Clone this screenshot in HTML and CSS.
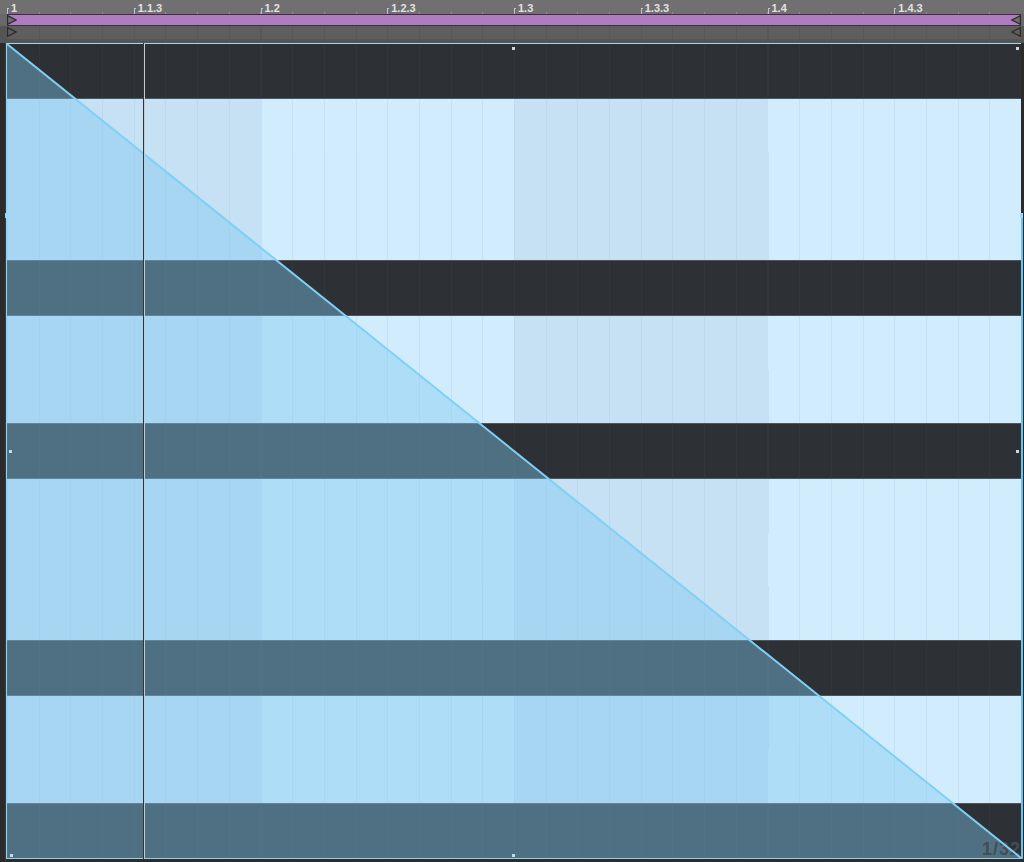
FILE: index.html
```html
<!DOCTYPE html>
<html>
<head>
<meta charset="utf-8">
<link rel="stylesheet" href="styles.css">
</head>
<body>
<div class="app">
  <div class="ruler">
    <div class="ruler-grid">
      <div class="mark"><span class="tick"></span><span class="lbl">1</span></div>
      <div class="mark"><span class="tick"></span><span class="lbl">1.1.3</span></div>
      <div class="mark"><span class="tick"></span><span class="lbl">1.2</span></div>
      <div class="mark"><span class="tick"></span><span class="lbl">1.2.3</span></div>
      <div class="mark"><span class="tick"></span><span class="lbl">1.3</span></div>
      <div class="mark"><span class="tick"></span><span class="lbl">1.3.3</span></div>
      <div class="mark"><span class="tick"></span><span class="lbl">1.4</span></div>
      <div class="mark"><span class="tick"></span><span class="lbl">1.4.3</span></div>
    </div>
  </div>
  <div class="loop">
    <div class="loop-bar"></div>
    <svg class="flag flag-l1" width="10" height="10" viewBox="0 0 10 10"><path d="M0.6 0.6 L9 5 L0.6 9.4 Z" fill="#6e6e6e" stroke="#2a2a2a" stroke-width="1.2"/></svg>
    <svg class="flag flag-r1" width="10" height="10" viewBox="0 0 10 10"><path d="M9.4 0.6 L1 5 L9.4 9.4 Z" fill="#6e6e6e" stroke="#2a2a2a" stroke-width="1.2"/></svg>
  </div>
  <div class="lane">
    <div class="lane-grid"></div>
    <svg class="flag flag-l2" width="10" height="10" viewBox="0 0 10 10"><path d="M0.6 0.6 L9 5 L0.6 9.4 Z" fill="#5e5e5e" stroke="#2a2a2a" stroke-width="1.2"/></svg>
    <svg class="flag flag-r2" width="10" height="10" viewBox="0 0 10 10"><path d="M9.4 0.6 L1 5 L9.4 9.4 Z" fill="#5e5e5e" stroke="#2a2a2a" stroke-width="1.2"/></svg>
  </div>
  <div class="editor">
    <div class="gutter"></div>
    <div class="clip">
      <div class="rows">
        <div class="row dark"></div>
        <div class="row light"></div>
        <div class="row light"></div>
        <div class="row light"></div>
        <div class="row dark"></div>
        <div class="row light"></div>
        <div class="row light"></div>
        <div class="row dark"></div>
        <div class="row light"></div>
        <div class="row light"></div>
        <div class="row light"></div>
        <div class="row dark"></div>
        <div class="row light"></div>
        <div class="row light"></div>
        <div class="row dark"></div>
      </div>
      <svg class="env" viewBox="0 0 1014 814" preserveAspectRatio="none">
        <polygon points="0,0 1014,814 0,814" fill="rgba(125,200,238,0.42)"/>
      </svg>
      <div class="grid-label">1/32</div>
      <svg class="env" viewBox="0 0 1014 814" preserveAspectRatio="none">
        <line x1="0" y1="0" x2="1014" y2="814" stroke="#80d0f6" stroke-width="2"/>
      </svg>
      <div class="cursor"></div>
      <div class="edge-r"></div>
      <div class="handle handle-l"></div>
      <div class="handle handle-r"></div>
      <div class="dot d1"></div>
      <div class="dot d2"></div>
      <div class="dot d3"></div>
      <div class="dot d4"></div>
      <div class="dot d5"></div>
      <div class="dot d6"></div>
    </div>
    <div class="gutter-r"></div>
  </div>
</div>
</body>
</html>
```

FILE: styles.css
```css
* { box-sizing: border-box; }
html, body {
  margin: 0;
  padding: 0;
  width: 1024px;
  height: 862px;
  overflow: hidden;
  background: #2b2b2b;
  font-family: "Liberation Sans", Arial, sans-serif;
}
.app {
  width: 1024px;
  height: 862px;
  display: flex;
  flex-direction: column;
}

/* ruler */
.ruler {
  height: 14px;
  background: #707070;
  padding-left: 7px;
  flex: none;
}
.ruler-grid {
  width: 1014px;
  height: 14px;
  display: flex;
  background-image: repeating-linear-gradient(to right, #8e8e8e 0 1px, transparent 1px 31.6875px);
  background-size: 100% 2px;
  background-position: 0 100%;
  background-repeat: no-repeat;
}
.mark {
  flex: 1;
  display: flex;
  align-items: flex-start;
  position: relative;
}
.tick {
  width: 2px;
  height: 6px;
  margin-top: 8px;
  border-left: 1px solid #c4c4c4;
  border-top: 1px solid #c4c4c4;
  flex: none;
}
.lbl {
  margin-left: 2px;
  font-size: 11px;
  font-weight: bold;
  line-height: 14px;
  padding-top: 1px;
  color: #e2e2e2;
}

/* loop bar */
.loop {
  height: 12px;
  background: #686868;
  padding-left: 7px;
  position: relative;
  flex: none;
}
.loop-bar {
  width: 1014px;
  height: 12px;
  background: #af7cc0;
  border-top: 1px solid #3c3040;
  border-bottom: 1px solid #3c3040;
}
.flag { position: absolute; display: block; }
.flag-l1 { left: 7px; top: 1px; }
.flag-r1 { left: 1011px; top: 1px; }

/* lane */
.lane {
  height: 17px;
  background: #555555;
  padding-left: 7px;
  position: relative;
  flex: none;
}
.lane-grid {
  width: 1014px;
  height: 13px;
  background-color: #5e5e5e;
  background-image: repeating-linear-gradient(to right, #585858 0 1px, transparent 1px 31.6875px);
}
.flag-l2 { left: 7px; top: 1px; }
.flag-r2 { left: 1011px; top: 1px; }

/* editor */
.editor {
  flex: 1;
  display: flex;
  min-height: 0;
}
.gutter {
  width: 6px;
  flex: none;
  background: #2b2b2b;
  border-right: 1px solid #3a3a3a;
}
.gutter-r {
  flex: 1;
  background: #2b2b2b;
}
.clip {
  width: 1015px;
  height: 816px;
  flex: none;
  position: relative;
  z-index: 1;
  border-left: 1px solid #8fd2f2;
  border-top: 1px solid #a8d8ee;
  border-bottom: 1px solid #8fd0f0;
}
.rows {
  width: 1014px;
  height: 814px;
  display: flex;
  flex-direction: column;
}
.row { flex: 1; }
.row.dark {
  background-color: #2d3135;
  background-image: repeating-linear-gradient(to right, rgba(255,255,255,0.025) 0 1px, transparent 1px 31.6875px);
  border-top: 1px solid #4e565d;
  border-bottom: 1px solid #4e565d;
}
.row.dark:first-child { border-top: 0; }
.row.dark:last-child { border-bottom: 0; }
.row.light {
  background-image:
    repeating-linear-gradient(to right, rgba(150,195,225,0.25) 0 1px, transparent 1px 31.6875px),
    linear-gradient(to right, #c5e1f3 0 25%, #d0ecfd 25% 50%, #c5e1f3 50% 75%, #d0ecfd 75% 100%);
}

.env {
  position: absolute;
  left: 0;
  top: 0;
  width: 1014px;
  height: 814px;
  overflow: visible;
}
.cursor {
  position: absolute;
  left: 136px;
  top: -1px;
  bottom: -1px;
  width: 2px;
  border-left: 1px solid #2a3640;
  background: #c3ccd1;
}
.edge-r {
  position: absolute;
  left: 1014px;
  top: 171px;
  bottom: -1px;
  width: 2px;
  background: #6cc2ec;
}
.handle {
  position: absolute;
  width: 3px;
  height: 5px;
  background: #9ad8f8;
}
.handle-l { left: -2px; top: 169px; }
.handle-r { left: 1013px; top: 169px; }
.dot {
  position: absolute;
  width: 3px;
  height: 3px;
  background: #c6d8e2;
}
.d1 { left: 505px; top: 3px; }
.d2 { left: 1009px; top: 3px; }
.d3 { left: 2px; top: 406px; }
.d4 { left: 1009px; top: 406px; }
.d5 { left: 3px; top: 810px; }
.d6 { left: 505px; top: 810px; }
.grid-label {
  position: absolute;
  right: 0;
  bottom: 0;
  font-size: 18px;
  font-weight: bold;
  line-height: 18px;
  color: #454c52;
  letter-spacing: 1px;
}
```
